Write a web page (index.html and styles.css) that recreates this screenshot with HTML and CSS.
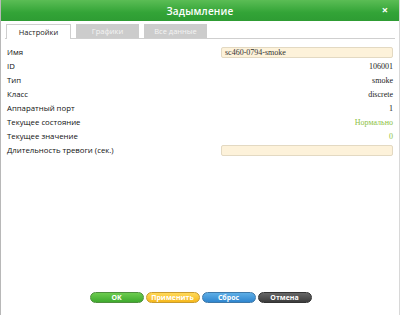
FILE: index.html
```html
<!DOCTYPE html>
<html>
<head>
<meta charset="utf-8">
<link rel="stylesheet" href="styles.css">
</head>
<body>
<div class="dialog">
  <div class="titlebar">
    <span class="title">Задымление</span>
    <span class="close">×</span>
  </div>
  <div class="tabs">
    <div class="tab active">Настройки</div>
    <div class="tab">Графики</div>
    <div class="tab">Все данные</div>
  </div>
  <div class="content">
    <div class="row"><span class="label">Имя</span><span class="input">sc460-0794-smoke</span></div>
    <div class="row"><span class="label">ID</span><span class="value">106001</span></div>
    <div class="row"><span class="label">Тип</span><span class="value">smoke</span></div>
    <div class="row"><span class="label">Класс</span><span class="value">discrete</span></div>
    <div class="row"><span class="label">Аппаратный порт</span><span class="value">1</span></div>
    <div class="row"><span class="label">Текущее состояние</span><span class="value ok">Нормально</span></div>
    <div class="row"><span class="label">Текущее значение</span><span class="value ok">0</span></div>
    <div class="row"><span class="label">Длительность тревоги (сек.)</span><span class="input"></span></div>
  </div>
  <div class="buttons">
    <span class="btn green">OK</span>
    <span class="btn yellow">Применить</span>
    <span class="btn blue">Сброс</span>
    <span class="btn dark">Отмена</span>
  </div>
</div>
</body>
</html>
```
FILE: styles.css
```css
html, body {
  margin: 0;
  padding: 0;
  background: #ffffff;
}
.dialog {
  width: 400px;
  height: 315px;
  box-sizing: border-box;
  border-left: 1px solid #b8b8b8;
  border-right: 1px solid #d8d8d8;
  display: flex;
  flex-direction: column;
  font-family: "Open Sans", "Liberation Sans", sans-serif;
}
.titlebar {
  height: 21px;
  background: linear-gradient(#5bbd55, #33a437 60%, #2e9c33);
  display: flex;
  align-items: center;
  justify-content: center;
  position: relative;
  color: #fff;
}
.title {
  font-size: 10px;
  font-weight: 600;
  letter-spacing: 0.2px;
}
.close {
  position: absolute;
  right: 11px;
  top: 4px;
  font-size: 11px;
  font-weight: 700;
  line-height: 12px;
}
.tabs {
  margin: 3px 4px 0 4px;
  height: 14px;
  display: flex;
  gap: 5px;
  border-bottom: 1px solid #cfcfcf;
  padding-left: 1px;
}
.tab {
  height: 14px;
  box-sizing: border-box;
  background: #cccccc;
  color: #f4f4f4;
  font-size: 7.5px;
  display: flex;
  align-items: center;
  justify-content: center;
  width: 63px;
}
.tab.active {
  background: #fff;
  color: #222;
  border: 1px solid #cfcfcf;
  border-bottom: none;
  height: 15px;
  width: 65px;
}
.content {
  padding: 6px 6px 0 6px;
  flex: 1;
}
.row {
  height: 14px;
  display: flex;
  align-items: center;
  justify-content: space-between;
}
.label {
  font-size: 7.8px;
  color: #111;
}
.value {
  font-family: "Liberation Serif", serif;
  font-size: 8px;
  color: #222;
}
.value.ok {
  color: #8cbf3f;
}
.input {
  width: 172px;
  height: 11px;
  box-sizing: border-box;
  background: #fdf2da;
  border: 1px solid #e3d9c2;
  border-radius: 2px;
  font-family: "Liberation Serif", serif;
  font-size: 8px;
  color: #333;
  padding-left: 3px;
  line-height: 9px;
}
.buttons {
  display: flex;
  justify-content: center;
  gap: 2px;
  padding-bottom: 12px;
  padding-left: 1px;
}
.btn {
  width: 54px;
  height: 11px;
  border-radius: 6px;
  box-sizing: border-box;
  font-size: 7px;
  font-weight: 700;
  color: #fff;
  display: flex;
  align-items: center;
  justify-content: center;
  border: 1px solid #9a9a9a;
}
.green { background: linear-gradient(#6ccc4f, #3faa2e); border-color: #4e8f3d; }
.yellow { background: linear-gradient(#ffd95a, #f6b81c); border-color: #c89b2e; }
.blue { background: linear-gradient(#5eaee6, #2f86cf); border-color: #3e78a8; }
.dark { background: linear-gradient(#666, #3c3c3c); border-color: #333; }
```
